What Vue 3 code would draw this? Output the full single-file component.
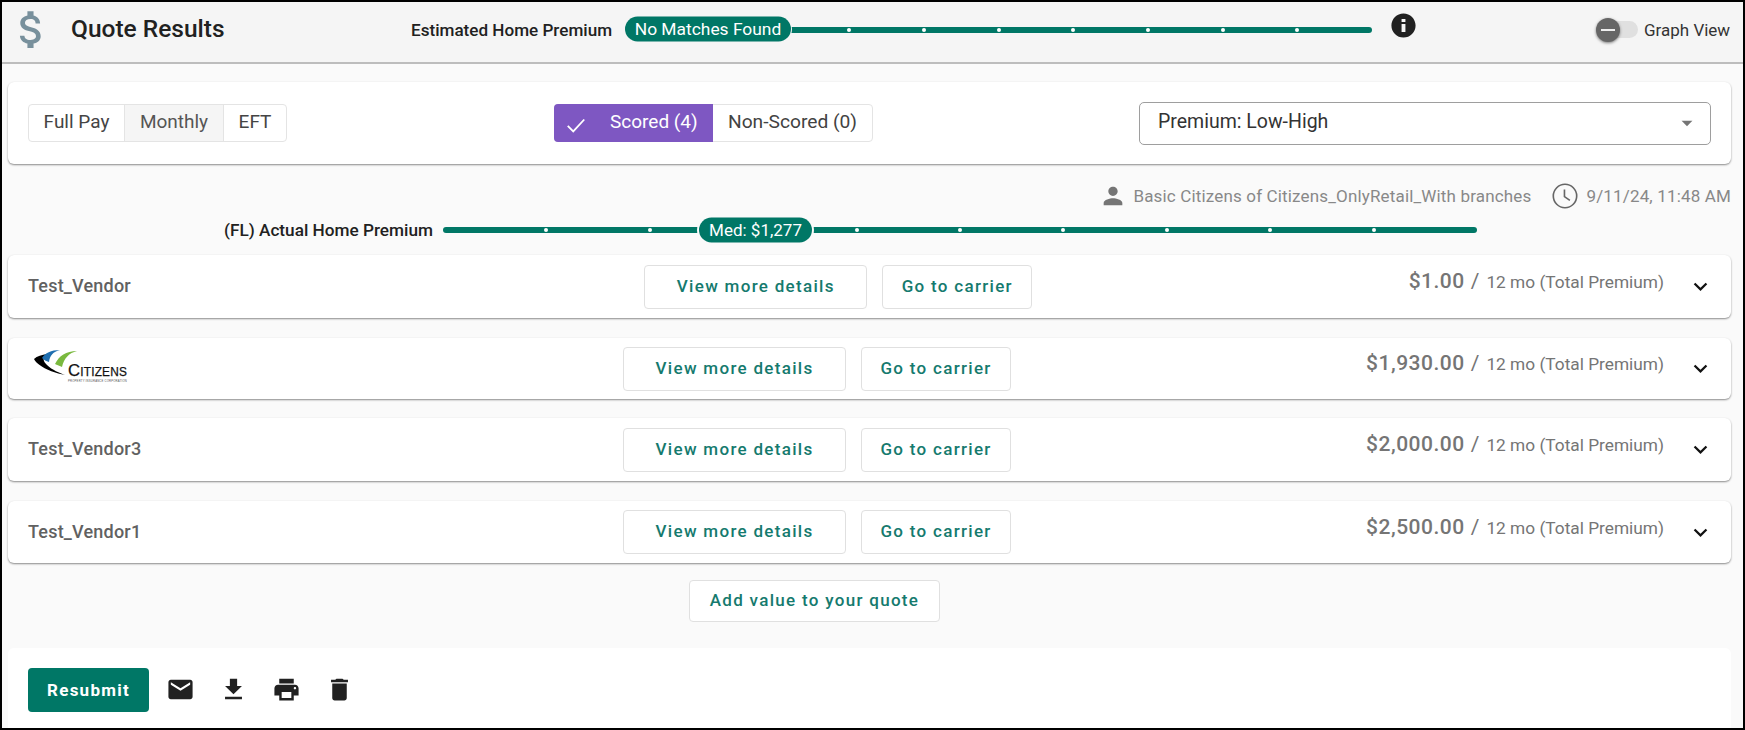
<script setup>
const headerTicks = [3, 4, 5, 6, 7, 8, 9]
const actualTicks = [1, 2, 4, 5, 6, 7, 8, 9]
const icons = {
  email: 'M20 4H4c-1.1 0-1.99.9-1.99 2L2 18c0 1.1.9 2 2 2h16c1.1 0 2-.9 2-2V6c0-1.1-.9-2-2-2zm0 4l-8 5-8-5V6l8 5 8-5v2z',
  download: 'M19 9h-4V3H9v6H5l7 7 7-7zM5 18v2h14v-2H5z',
  print: 'M19 8H5c-1.66 0-3 1.34-3 3v6h4v4h12v-4h4v-6c0-1.66-1.34-3-3-3zm-3 11H8v-5h8v5zm3-7c-.55 0-1-.45-1-1s.45-1 1-1 1 .45 1 1-.45 1-1 1zm-1-9H6v4h12V3z',
  trash: 'M6 19c0 1.1.9 2 2 2h8c1.1 0 2-.9 2-2V7H6v12zM19 4h-3.5l-1-1h-5l-1 1H5v2h14V4z'
}
const footerIcons = [icons.email, icons.download, icons.print, icons.trash]
const quotes = [
  { id: 1, name: 'Test_Vendor', price: '$1.00', cls: 'r1' },
  { id: 2, logo: true, price: '$1,930.00', cls: 'r2' },
  { id: 3, name: 'Test_Vendor3', price: '$2,000.00', cls: 'r3' },
  { id: 4, name: 'Test_Vendor1', price: '$2,500.00', cls: 'r4' }
]
</script>

<template>
  <div class="page">
    <header class="top">
      <svg class="dollar" viewBox="0 0 24 24"><path d="M11.8 10.9c-2.27-.59-3-1.2-3-2.15 0-1.09 1.01-1.85 2.7-1.85 1.78 0 2.44.85 2.5 2.1h2.21c-.07-1.72-1.12-3.3-3.21-3.81V3h-3v2.16c-1.94.42-3.5 1.68-3.5 3.61 0 2.31 1.91 3.46 4.7 4.13 2.5.6 3 1.48 3 2.41 0 .69-.49 1.79-2.7 1.79-2.06 0-2.87-.92-2.98-2.1h-2.2c.12 2.19 1.76 3.42 3.68 3.83V21h3v-2.15c1.95-.37 3.5-1.5 3.5-3.55 0-2.84-2.43-3.81-4.7-4.4z"/></svg>
      <h1 class="title">Quote Results</h1>
      <span class="est-label">Estimated Home Premium</span>
      <div class="track est-track">
        <i v-for="t in headerTicks" :key="t" class="tick" :style="{ left: t * 10 + '%' }"></i>
        <span class="pill est-pill">No Matches Found</span>
      </div>
      <svg class="info" viewBox="0 0 24 24"><path d="M12 2C6.48 2 2 6.48 2 12s4.48 10 10 10 10-4.48 10-10S17.52 2 12 2zm1.6 15.4h-3.2v-6.6h3.2v6.6zm0-8.2h-3.2V6.6h3.2v2.6z"/></svg>
      <div class="toggle">
        <span class="toggle-track"></span>
        <span class="toggle-thumb"><i></i></span>
      </div>
      <span class="graph">Graph View</span>
    </header>

    <main class="body">
      <section class="card filters">
        <div class="group pay">
          <span class="seg">Full Pay</span>
          <span class="seg active">Monthly</span>
          <span class="seg">EFT</span>
        </div>
        <div class="group score">
          <span class="seg purple">
            <svg class="check" viewBox="0 0 24 24"><path d="M3 13l6 6L21 6" /></svg>
            Scored (4)
          </span>
          <span class="seg non">Non-Scored (0)</span>
        </div>
        <div class="select">
          <span>Premium: Low-High</span>
          <svg class="caret" viewBox="0 0 24 24"><path d="M7 10l5 5 5-5z"/></svg>
        </div>
      </section>

      <div class="meta">
        <svg class="person" viewBox="0 0 24 24"><path d="M12 12c2.21 0 4-1.79 4-4s-1.79-4-4-4-4 1.79-4 4 1.79 4 4 4zm0 2c-2.67 0-8 1.34-8 4v2h16v-2c0-2.66-5.33-4-8-4z"/></svg>
        <span class="meta-text">Basic Citizens of Citizens_OnlyRetail_With branches</span>
        <svg class="clock" viewBox="0 0 24 24"><circle cx="12" cy="12" r="10.8"/><path d="M11.5 6v6.5l5 3.5"/></svg>
        <span class="meta-text">9/11/24, 11:48 AM</span>
      </div>

      <div class="actual">
        <span class="act-label">(FL) Actual Home Premium</span>
        <div class="track act-track">
          <i v-for="t in actualTicks" :key="t" class="tick" :style="{ left: t * 10 + '%' }"></i>
          <span class="pill act-pill">Med: $1,277</span>
        </div>
      </div>

      <section v-for="q in quotes" :key="q.id" class="card row" :class="q.cls">
        <div class="name">
          <svg v-if="q.logo" class="logo" viewBox="0 0 94 34">
            <path d="M0 9C3 6 8 5 13 4 8 8 9 11 13 15 18 20 26 23 31 25 20 23 4 17 0 9z" fill="#000"/>
            <path d="M8 8C11 3 17 0 26 0 19 2 16 5 15 12 12 11 10 10 8 8z" fill="#1f6fb0"/>
            <path d="M21 14C25 6 32 1 43 1 35 3 30 8 28 17 26 16 23 15 21 14z" fill="#7ab93f"/>
            <text x="34" y="26" class="logo-big" textLength="59" lengthAdjust="spacingAndGlyphs">Citizens</text>
            <text x="34" y="32" class="logo-small" textLength="59" lengthAdjust="spacingAndGlyphs">PROPERTY INSURANCE CORPORATION</text>
          </svg>
          <template v-else>{{ q.name }}</template>
        </div>
        <div class="actions">
          <button class="btn wide">View more details</button>
          <button class="btn">Go to carrier</button>
        </div>
        <div class="price"><b>{{ q.price }}</b> <em>/</em> <span>12 mo (Total Premium)</span></div>
        <svg class="chev" viewBox="0 0 24 24"><path d="M16.59 8.59L12 13.17 7.41 8.59 6 10l6 6 6-6z"/></svg>
      </section>

      <div class="add-wrap"><button class="btn add">Add value to your quote</button></div>

      <footer class="card foot">
        <button class="resubmit">Resubmit</button>
        <svg v-for="p in footerIcons" :key="p" class="fi" viewBox="0 0 24 24"><path :d="p"/></svg>
      </footer>
    </main>
  </div>
</template>

<style scoped>
.page {
  box-sizing: border-box;
  width: 1745px;
  height: 730px;
  border: 2px solid #000;
  background: #fafafa;
  font-family: Roboto, sans-serif;
  overflow: hidden;
  display: flex;
  flex-direction: column;
}
.top {
  height: 62px;
  flex: none;
  box-sizing: border-box;
  background: #f5f5f5;
  border-bottom: 2px solid #bdbdbd;
  padding-bottom: 5px;
  display: flex;
  align-items: center;
  position: relative;
}
.dollar { width: 49px; height: 49px; fill: #78909c; margin-left: 5px; flex: none; }
.title { margin: 0 0 0 15px; width: 340px; flex: none; font-size: 24.5px; font-weight: 500; color: #212121; line-height: 1; letter-spacing: 0; }
.est-label { width: 214px; flex: none; font-size: 17.1px; font-weight: 500; color: #212121; white-space: nowrap; }
.track { position: relative; height: 6px; background: #007766; border-radius: 3px; flex: none; }
.est-track { width: 747px; }
.tick { position: absolute; top: 1px; width: 4px; height: 4px; margin-left: -2px; background: #fff; border-radius: 50%; }
.pill {
  position: absolute;
  top: 50%;
  transform: translateY(-50%);
  height: 25px;
  line-height: 25px;
  border-radius: 13px;
  background: #007766;
  color: #fff;
  font-size: 17px;
  text-align: center;
  white-space: nowrap;
  box-shadow: 0 0 0 2px #fafafa;
}
.est-pill { left: 0; width: 166px; font-size: 17.4px; line-height: 24px; box-shadow: 0 0 0 1px #f5f5f5; margin-top: -1px; }
.act-pill { left: 256px; width: 113px; }
.info { width: 29px; height: 29px; fill: #212121; margin-left: 17px; margin-top: -8px; flex: none; }
.toggle { position: relative; width: 46px; height: 26px; margin-left: 178px; flex: none; }
.toggle-track { position: absolute; left: 12px; top: 4px; width: 30px; height: 17px; border-radius: 9px; background: #e0e0e0; }
.toggle-thumb { position: absolute; left: 0; top: 1px; width: 24px; height: 24px; border-radius: 50%; background: #666; box-shadow: 0 1px 3px rgba(0,0,0,.5); display: flex; align-items: center; justify-content: center; }
.toggle-thumb i { width: 14px; height: 2px; background: #eee; }
.graph { font-size: 17px; color: #333; margin-left: 2px; white-space: nowrap; }

.body { flex: 1; display: flex; flex-direction: column; padding: 0 12px 0 6px; min-height: 0; }
.card { background: #fff; border-radius: 6px; box-shadow: 0 1px 2px rgba(0,0,0,.45); flex: none; }
.filters { margin-top: 18px; height: 82px; display: flex; align-items: center; padding: 0 20px; position: relative; }
.group { display: flex; height: 38px; box-sizing: border-box; border: 1px solid #e4e4e4; border-radius: 4px; font-size: 19px; color: #444; }
.seg { display: flex; align-items: center; justify-content: center; box-sizing: border-box; padding-bottom: 3px; }
.pay { width: 259px; flex: none; }
.pay .seg:nth-child(1) { width: 95px; }
.pay .seg:nth-child(2) { width: 100px; background: #f5f5f5; border-left: 1px solid #e4e4e4; border-right: 1px solid #e4e4e4; color: #555; }
.pay .seg:nth-child(3) { flex: 1; }
.score { width: 319px; flex: none; margin-left: 267px; }
.purple { width: 159px; margin: -1px 0 -1px -1px; padding-left: 11px; background: #7e57c2; color: #fff; border-radius: 4px 0 0 4px; gap: 23px; justify-content: flex-start; }
.non { flex: 1; color: #424242; font-size: 19.2px; }
.check { width: 22px; height: 22px; fill: none; stroke: #fff; stroke-width: 2; margin-top: 6px; }
.select { flex: none; box-sizing: border-box; width: 572px; height: 43px; margin-left: 266px; border: 1px solid #9e9e9e; border-radius: 5px; display: flex; align-items: center; justify-content: space-between; padding: 0 10px 0 18px; font-size: 19.5px; color: #333; }
.select > span { margin-top: -3px; }
.caret { width: 26px; height: 26px; fill: #757575; }

.meta { display: flex; align-items: center; justify-content: flex-end; height: 32px; margin-top: 16px; color: #888; }
.meta-text { font-size: 17px; color: #888; white-space: nowrap; letter-spacing: .16px; }
.person { width: 28px; height: 28px; fill: #757575; margin-right: 6px; }
.clock { width: 26px; height: 26px; fill: none; stroke: #666; stroke-width: 1.5; margin: 0 8px 0 21px; }

.actual { display: flex; align-items: center; height: 30px; margin-top: 3px; }
.act-label { margin-left: 216px; width: 219px; flex: none; font-size: 17.2px; font-weight: 500; color: #212121; white-space: nowrap; }
.act-track { width: 1034px; }

.row { display: flex; align-items: center; padding-left: 20px; padding-right: 17px; }
.r1 { height: 63px; margin-top: 10px; }
.r2 { height: 61px; margin-top: 20px; }
.r3 { height: 63px; margin-top: 19px; }
.r4 { height: 62px; margin-top: 20px; }
.name { width: 240px; flex: none; font-size: 18px; font-weight: 500; color: #616161; letter-spacing: .2px; padding-bottom: 2px; }
.logo { display: block; width: 94px; height: 34px; margin-left: 6px; margin-top: -1px; overflow: visible; }
.logo-big { font-family: 'Liberation Sans', sans-serif; font-size: 17px; font-weight: 400; fill: #111; stroke: #111; stroke-width: .25; font-variant: small-caps; }
.logo-small { font-family: 'Liberation Sans', sans-serif; font-size: 3px; fill: #555; }
.actions { flex: 1; display: flex; justify-content: center; gap: 15px; }
.btn { box-sizing: border-box; height: 44px; width: 150px; background: #fff; border: 1px solid #e0e0e0; border-radius: 4px; font-family: Roboto, sans-serif; font-size: 17px; font-weight: 500; color: #157a6e; letter-spacing: 1.3px; padding: 0 0 2px; }
.wide { width: 223px; }
.price { white-space: nowrap; color: #757575; margin-top: -11px; display: flex; align-items: baseline; gap: 6px; }
.price b { font-size: 21px; font-weight: 500; color: #757575; letter-spacing: .5px; }
.price em { font-style: normal; font-size: 21px; }
.price span { font-size: 17.3px; color: #757575; margin-left: 1px; }
.chev { width: 27px; height: 27px; fill: #111; margin-left: 23px; flex: none; }

.add-wrap { display: flex; margin-top: 17px; padding-left: 681px; }
.add { width: 251px; height: 42px; }
.foot { margin-top: 26px; flex: 1; min-height: 0; border-radius: 6px 6px 0 0; box-shadow: none; display: flex; align-items: center; padding: 3px 20px 0; }
.resubmit { width: 121px; height: 44px; flex: none; border: 0; border-radius: 4px; background: #007766; color: #fff; font-family: Roboto, sans-serif; font-size: 17px; font-weight: 700; letter-spacing: 1.25px; margin-right: 17px; }
.fi { width: 29px; height: 29px; fill: #212121; margin-right: 24px; flex: none; }
</style>
